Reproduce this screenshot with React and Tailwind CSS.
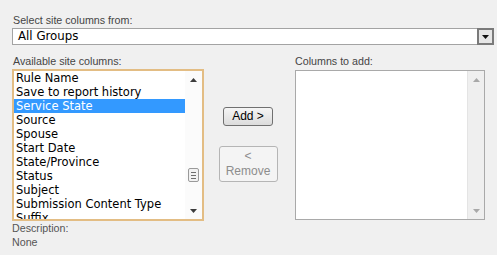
const AVAILABLE = [
  'Rule Name',
  'Save to report history',
  'Service State',
  'Source',
  'Spouse',
  'Start Date',
  'State/Province',
  'Status',
  'Subject',
  'Submission Content Type',
  'Suffix',
]

const SELECTED = 'Service State'

function Arrow({ up, color }) {
  return (
    <svg width="7" height="4" viewBox="0 0 7 4" className="block">
      <path d={up ? 'M0 4 L3.5 0 L7 4 Z' : 'M0 0 L7 0 L3.5 4 Z'} fill={color} />
    </svg>
  )
}

function Scrollbar({ active }) {
  const arrow = active ? '#3c3c3c' : '#a8a8a8'
  return (
    <div className={`flex flex-col w-[17px] ${active ? 'bg-[#fbfbfb]' : 'bg-[#efefef] border-l border-[#e4e4e4]'}`}>
      <div className="h-[17px] flex items-center justify-center">
        <Arrow up color={arrow} />
      </div>
      {active && (
        <div className="mt-[80px] mx-auto h-[14px] w-[11px] border border-[#9a9a9a] rounded-[2px] bg-[#f2f2f2] flex flex-col justify-center gap-[2px] px-[2px]">
          <div className="h-px bg-[#6e6e6e]" />
          <div className="h-px bg-[#6e6e6e]" />
          <div className="h-px bg-[#6e6e6e]" />
        </div>
      )}
      <div className="flex-1" />
      <div className="h-[17px] flex items-center justify-center">
        <Arrow color={arrow} />
      </div>
    </div>
  )
}

export default function App() {
  return (
    <div className="w-[497px] h-[255px] bg-[#f0f0f0] pt-[13px] pl-[12px] overflow-hidden font-['Liberation_Sans',Arial,sans-serif] text-[10.7px] text-[#454545]">
      {/* Group picker */}
      <div className="leading-[15px] pl-px">Select site columns from:</div>
      <div className="flex w-[482px] h-[17px]">
        <div className="flex-1 border border-r-0 border-[#a3a3a3] bg-white pl-[5px] font-['DejaVu_Sans',Verdana,sans-serif] text-[11.8px] leading-[15px] text-black">
          All Groups
        </div>
        <div className="w-[17px] h-[17px] border-2 border-[#7a7a7a] bg-[#e6e6e6] flex items-center justify-center">
          <Arrow color="#111" />
        </div>
      </div>

      <div className="flex mt-[8px]">
        {/* Available columns */}
        <div className="w-[192px]">
          <div className="leading-[16px] pl-px">Available site columns:</div>
          <div className="h-[152px] border-2 border-[#e3bd84] bg-white flex overflow-hidden">
            <div className="flex-1 overflow-hidden font-['DejaVu_Sans',Verdana,sans-serif] text-[11.5px] text-black">
              {AVAILABLE.map((name) => (
                <div
                  key={name}
                  className={`h-[14px] leading-[15px] pl-[2px] whitespace-nowrap ${
                    name === SELECTED ? 'bg-[#3399ff] text-white' : ''
                  }`}
                >
                  {name}
                </div>
              ))}
            </div>
            <Scrollbar active />
          </div>
        </div>

        {/* Buttons */}
        <div className="w-[91px] flex flex-col items-center pt-[54px] pr-[3px] text-[12px]">
          <button className="w-[50px] h-[19px] border border-[#707070] rounded-[3px] bg-gradient-to-b from-[#f5f5f5] to-[#dcdcdc] leading-[17px] text-black">
            Add &gt;
          </button>
          <button className="mt-[20px] w-[59px] h-[36px] border border-[#b5b5b5] rounded-[3px] bg-[#f4f4f4] flex flex-col items-center justify-center leading-[15px] text-[#8d8d8d]">
            <span>&lt;</span>
            <span>Remove</span>
          </button>
        </div>

        {/* Columns to add */}
        <div>
          <div className="leading-[16px]">Columns to add:</div>
          <div className="mt-px w-[190px] h-[150px] border border-[#a9a9a9] bg-white flex">
            <div className="flex-1" />
            <Scrollbar />
          </div>
        </div>
      </div>

      <div className="leading-[14px] text-[#555]">
        <div>Description:</div>
        <div>None</div>
      </div>
    </div>
  )
}
